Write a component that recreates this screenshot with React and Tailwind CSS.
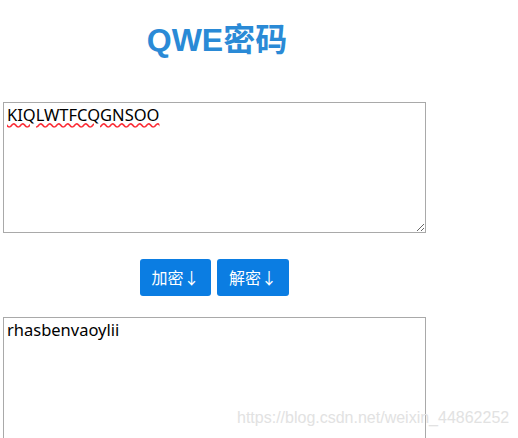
import React, { useState } from 'react';

const font = { fontFamily: "'Noto Sans', 'Noto Sans CJK SC', sans-serif" };

export default function App() {
  const [plain, setPlain] = useState('KIQLWTFCQGNSOO');
  const [cipher, setCipher] = useState('rhasbenvaoylii');

  return (
    <div className="relative w-[518px] h-[438px] overflow-hidden bg-white" style={font}>
      <div className="w-[429px]">
        <h1 className="pt-[18px] pl-[5px] text-center text-[32px] leading-[44px] font-bold text-[#2a8ad6] font-['Liberation_Sans','Noto_Sans_CJK_SC',sans-serif]">
          QWE密码
        </h1>

        <div className="mt-[40px] px-[3px]">
          <textarea
            value={plain}
            onChange={(e) => setPlain(e.target.value)}
            className="block w-[423px] h-[131px] border border-[#a9a9a9] px-[3px] py-[1px] text-[16.5px] leading-[22px] text-black outline-none underline decoration-wavy decoration-red-500"
            style={font}
          />
        </div>

        {/* buttons */}
        <div className="mt-[26px] flex justify-center gap-[6px]">
          <button className="w-[71px] h-[37px] rounded-[3px] bg-[#0b7de2] text-white text-[16px]">
            加密↓
          </button>
          <button className="w-[72px] h-[37px] rounded-[3px] bg-[#0b7de2] text-white text-[16px]">
            解密↓
          </button>
        </div>

        <div className="mt-[21px] px-[3px]">
          <textarea
            value={cipher}
            onChange={(e) => setCipher(e.target.value)}
            className="block w-[423px] h-[131px] border border-[#a9a9a9] px-[3px] py-[1px] text-[16.5px] leading-[22px] text-black outline-none"
            style={font}
          />
        </div>
      </div>

      {/* watermark */}
      <div className="absolute left-[237px] top-[406px] text-[16px] text-[#e2e2e2] font-['Liberation_Sans',sans-serif] pointer-events-none whitespace-nowrap">
        https://blog.csdn.net/weixin_44862252
      </div>
    </div>
  );
}
